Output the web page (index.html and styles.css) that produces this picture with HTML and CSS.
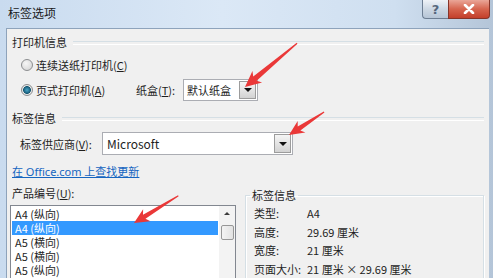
FILE: index.html
```html
<!DOCTYPE html>
<html lang="zh-CN">
<head>
    <meta charset="utf-8">
    <title>标签选项</title>
    <link rel="stylesheet" href="styles.css">
</head>
<body>
<div class="window">
    <div class="titlebar">
        <span class="title">标签选项</span>
        <div class="caption-buttons">
            <span class="cap-btn help">?</span>
            <span class="cap-btn close">
                <svg width="12" height="10" viewBox="0 0 12 10"><path d="M2 1 L10 9 M10 1 L2 9" stroke="#fff" stroke-width="2.6" stroke-linecap="round"/></svg>
            </span>
        </div>
    </div>

    <div class="client">
        <div class="sect-head"><span>打印机信息</span></div>
        <div class="radio-row">
            <span class="radio"></span>
            <span>连续送纸打印机(<u>C</u>)</span>
        </div>
        <div class="radio-row tray-row">
            <span class="radio on"></span>
            <span class="radio-label">页式打印机(<u>A</u>)</span>
            <span class="tray-label">纸盒(<u>T</u>):</span>
            <div class="combo tray">
                <span class="combo-text">默认纸盒</span>
                <span class="drop"></span>
            </div>
        </div>

        <div class="sect-head second"><span>标签信息</span></div>
        <div class="vendor-row">
            <span class="vendor-label">标签供应商(<u>V</u>):</span>
            <div class="combo vendor">
                <span class="combo-text latin">Microsoft</span>
                <span class="drop"></span>
            </div>
        </div>
        <a class="update-link" href="#">在 Office.com 上查找更新</a>

        <div class="bottom">
            <div class="product">
                <div class="field-label">产品编号(<u>U</u>):</div>
                <div class="listbox">
                    <ul class="items">
                        <li>A4 (纵向)</li>
                        <li class="selected">A4 (纵向)</li>
                        <li>A5 (横向)</li>
                        <li>A5 (横向)</li>
                        <li>A5 (纵向)</li>
                    </ul>
                    <div class="scrollbar">
                        <span class="up"></span>
                        <span class="thumb"></span>
                    </div>
                </div>
            </div>

            <fieldset class="info">
                <legend>标签信息</legend>
                <div class="info-grid">
                    <span>类型:</span><span>A4</span>
                    <span>高度:</span><span>29.69 厘米</span>
                    <span>宽度:</span><span>21 厘米</span>
                    <span>页面大小:</span><span>21 厘米 × 29.69 厘米</span>
                </div>
            </fieldset>
        </div>
    </div>

    <svg class="arrows" width="493" height="278" viewBox="0 0 493 278">
        <g fill="#ea3838">
            <polygon transform="translate(245 87) rotate(140)" points="-68,-0.6 -13,-2.7 -16,-7.5 0,0 -16,7.5 -13,2.7 -68,0.6"/>
            <polygon transform="translate(289 135) rotate(146.7)" points="-42,-0.6 -12,-2.4 -15,-7 0,0 -15,7 -12,2.4 -42,0.6"/>
            <polygon transform="translate(134 223) rotate(148.5)" points="-52,-0.6 -12,-2.4 -15,-7 0,0 -15,7 -12,2.4 -52,0.6"/>
        </g>
    </svg>
</div>
</body>
</html>
```

FILE: styles.css
```css
* {
    box-sizing: border-box;
}
html, body {
    margin: 0;
}
body {
    width: 493px;
    height: 278px;
    overflow: hidden;
    font-family: "Noto Sans CJK SC", "Noto Sans", sans-serif;
    font-size: 11px;
    color: #1e1e1e;
}

.window {
    position: relative;
    height: 278px;
    display: flex;
    flex-direction: column;
    background: linear-gradient(to right, #c9dbef, #dbe8f6 45%, #cfdff0 80%, #b4c5d8);
}

/* title bar */
.titlebar {
    height: 28px;
    flex: none;
    display: flex;
    justify-content: space-between;
    align-items: flex-start;
    padding-left: 8px;
}
.title {
    font-size: 12px;
    line-height: 26px;
    color: #1a1a1a;
}
.caption-buttons {
    display: flex;
    margin-right: 3px;
}
.cap-btn {
    height: 19px;
    display: flex;
    align-items: center;
    justify-content: center;
    border: 1px solid #6d7e93;
    border-top: 0;
}
.help {
    width: 26px;
    border-right: 0;
    border-radius: 0 0 0 4px;
    background: linear-gradient(#eef2f7, #cdd8e4 50%, #b6c5d6);
    color: #56677d;
    font: bold 13px "DejaVu Sans", sans-serif;
}
.close {
    width: 42px;
    border-color: #86352a;
    border-radius: 0 0 4px 0;
    background: linear-gradient(#eaa698, #d6654f 50%, #c33f2b);
}

/* dialog body */
.client {
    flex: 1;
    margin: 0 4px 0 6px;
    padding: 4px 5px 0 5px;
    background: #f0f0f0;
    border-top: 1px solid #8ea3bb;
    border-left: 1px solid #8ea3bb;
    display: flex;
    flex-direction: column;
}

.sect-head {
    display: flex;
    align-items: center;
    height: 18px;
    line-height: 18px;
}
.sect-head::after {
    content: "";
    flex: 1;
    height: 2px;
    margin: 2px 0 0 6px;
    border-top: 1px solid #d5dfe5;
    border-bottom: 1px solid #fff;
}
.sect-head.second {
    margin-top: 8px;
}

.radio-row {
    display: flex;
    align-items: center;
    height: 18px;
    margin-top: 5px;
    padding-left: 9px;
}
.radio {
    flex: none;
    width: 12px;
    height: 12px;
    margin-right: 3px;
    border-radius: 50%;
    border: 1px solid #8c8e90;
    background: radial-gradient(circle at 40% 35%, #f6f6f6, #d6d6d6 85%);
}
.radio.on {
    background: radial-gradient(circle at 50% 50%, #4aa6c4 0, #2c7c9d 2px, #185872 3.6px, #e9e9e9 4.2px, #d8d8d8 100%);
}

.tray-row {
    height: 22px;
}
.radio-label {
    width: 100px;
}
.tray-label {
    width: 47px;
}

.combo {
    display: flex;
    align-items: stretch;
    background: #fff;
    border: 1px solid #abadb3;
    height: 100%;
}
.combo-text {
    flex: 1;
    display: flex;
    align-items: center;
    padding-left: 3px;
}
.combo-text.latin {
    font-size: 12px;
    padding-left: 4px;
}
.drop {
    position: relative;
    width: 17px;
    margin: 1px;
    border: 1px solid #9c9c9c;
    background: linear-gradient(#f5f5f5, #e4e4e4 50%, #d2d2d2);
}
.drop::after {
    content: "";
    position: absolute;
    left: 50%;
    top: 50%;
    margin: -2px 0 0 -4px;
    border-left: 4px solid transparent;
    border-right: 4px solid transparent;
    border-top: 4px solid #111;
}
.tray {
    width: 75px;
}

.vendor-row {
    display: flex;
    align-items: center;
    height: 23px;
    margin-top: 5px;
    padding-left: 8px;
}
.vendor-label {
    width: 82px;
}
.vendor {
    width: 191px;
}

.update-link {
    align-self: flex-start;
    margin-top: 8px;
    height: 18px;
    line-height: 18px;
    font-family: "Noto Sans", "Noto Sans CJK SC", sans-serif;
    color: #1565c0;
    text-decoration: underline;
}

/* bottom part */
.bottom {
    display: flex;
    margin-top: 3px;
}
.product {
    width: 226px;
    margin-left: -2px;
    display: flex;
    flex-direction: column;
}
.field-label {
    height: 18px;
    line-height: 18px;
    padding-left: 2px;
}
.listbox {
    margin-top: 3px;
    height: 90px;
    display: flex;
    background: #fff;
    border: 1px solid #828790;
}
.items {
    flex: 1;
    margin: 0;
    padding: 1px 1px 0 1px;
    list-style: none;
}
.items li {
    height: 14px;
    line-height: 14px;
    padding-left: 3px;
}
.items li.selected {
    background: #3399ff;
    color: #fff;
}
.scrollbar {
    width: 16px;
    display: flex;
    flex-direction: column;
    align-items: center;
    background: #f3f3f3;
}
.up {
    margin-top: 6px;
    width: 0;
    height: 0;
    border-left: 3px solid transparent;
    border-right: 3px solid transparent;
    border-bottom: 3px solid #3c3c3c;
}
.thumb {
    margin-top: 10px;
    width: 13px;
    height: 15px;
    border: 1px solid #979797;
    border-radius: 2px;
    background: linear-gradient(to right, #f3f3f3, #e2e2e2);
}

.info {
    flex: 1;
    margin: 4px 0 0 9px;
    padding: 2px 8px 0 8px;
    min-width: 0;
    border: 1px solid #d5dfe5;
    box-shadow: inset 1px 1px 0 #fff, 1px 1px 0 #fff;
}
.info legend {
    margin-left: -4px;
    padding: 0 2px;
    line-height: 14px;
}
.info-grid {
    display: grid;
    grid-template-columns: 53px auto;
    grid-auto-rows: 18.5px;
    align-items: center;
}

.arrows {
    position: absolute;
    left: 0;
    top: 0;
    pointer-events: none;
}
```
